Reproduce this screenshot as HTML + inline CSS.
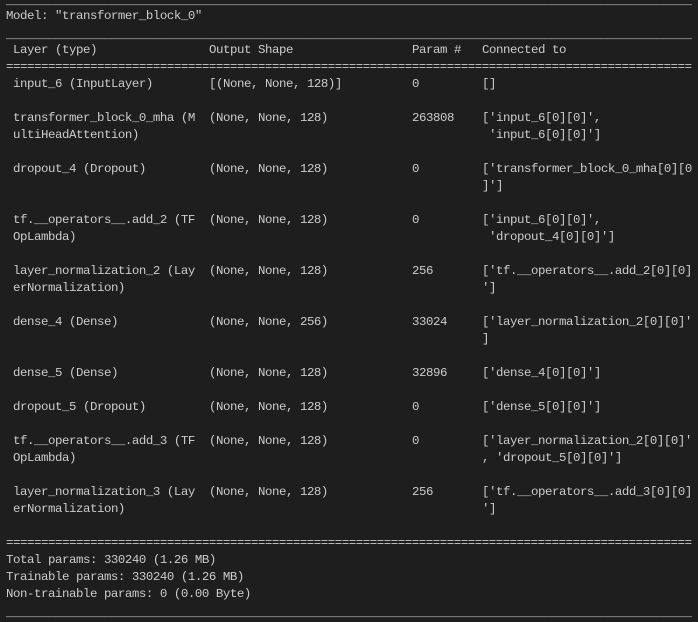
<!DOCTYPE html>
<html><head><meta charset="utf-8"><style>
html,body{margin:0;padding:0;background:#1e1e1e;width:698px;height:622px;overflow:hidden}
body{position:relative;font-family:"Liberation Mono",monospace;font-size:12.4px;letter-spacing:-0.44px;color:#cccccc}
.l{position:absolute;height:17px;line-height:17px;white-space:pre;left:6px}
.u{margin-top:2px}
.a{left:13px}.b{left:209px}.c{left:412px}.d{left:482px}
</style></head><body>
<div class="l u" style="top:-9px">__________________________________________________________________________________________________</div>
<div class="l" style="top:8px">Model: "transformer_block_0"</div>
<div class="l u" style="top:25px">__________________________________________________________________________________________________</div>
<div class="l a" style="top:42px">Layer (type)</div><div class="l b" style="top:42px">Output Shape</div><div class="l c" style="top:42px">Param #</div><div class="l d" style="top:42px">Connected to</div>
<div class="l" style="top:59px">==================================================================================================</div>

<div class="l a" style="top:76px">input_6 (InputLayer)</div><div class="l b" style="top:76px">[(None, None, 128)]</div><div class="l c" style="top:76px">0</div><div class="l d" style="top:76px">[]</div>

<div class="l a" style="top:110px">transformer_block_0_mha (M</div><div class="l b" style="top:110px">(None, None, 128)</div><div class="l c" style="top:110px">263808</div><div class="l d" style="top:110px">['input_6[0][0]',</div>
<div class="l a" style="top:127px">ultiHeadAttention)</div><div class="l d" style="top:127px"> 'input_6[0][0]']</div>

<div class="l a" style="top:161px">dropout_4 (Dropout)</div><div class="l b" style="top:161px">(None, None, 128)</div><div class="l c" style="top:161px">0</div><div class="l d" style="top:161px">['transformer_block_0_mha[0][0</div>
<div class="l d" style="top:178px">]']</div>

<div class="l a" style="top:212px">tf.__operators__.add_2 (TF</div><div class="l b" style="top:212px">(None, None, 128)</div><div class="l c" style="top:212px">0</div><div class="l d" style="top:212px">['input_6[0][0]',</div>
<div class="l a" style="top:229px">OpLambda)</div><div class="l d" style="top:229px"> 'dropout_4[0][0]']</div>

<div class="l a" style="top:263px">layer_normalization_2 (Lay</div><div class="l b" style="top:263px">(None, None, 128)</div><div class="l c" style="top:263px">256</div><div class="l d" style="top:263px">['tf.__operators__.add_2[0][0]</div>
<div class="l a" style="top:280px">erNormalization)</div><div class="l d" style="top:280px">']</div>

<div class="l a" style="top:314px">dense_4 (Dense)</div><div class="l b" style="top:314px">(None, None, 256)</div><div class="l c" style="top:314px">33024</div><div class="l d" style="top:314px">['layer_normalization_2[0][0]'</div>
<div class="l d" style="top:331px">]</div>

<div class="l a" style="top:365px">dense_5 (Dense)</div><div class="l b" style="top:365px">(None, None, 128)</div><div class="l c" style="top:365px">32896</div><div class="l d" style="top:365px">['dense_4[0][0]']</div>

<div class="l a" style="top:399px">dropout_5 (Dropout)</div><div class="l b" style="top:399px">(None, None, 128)</div><div class="l c" style="top:399px">0</div><div class="l d" style="top:399px">['dense_5[0][0]']</div>

<div class="l a" style="top:433px">tf.__operators__.add_3 (TF</div><div class="l b" style="top:433px">(None, None, 128)</div><div class="l c" style="top:433px">0</div><div class="l d" style="top:433px">['layer_normalization_2[0][0]'</div>
<div class="l a" style="top:450px">OpLambda)</div><div class="l d" style="top:450px">, 'dropout_5[0][0]']</div>

<div class="l a" style="top:484px">layer_normalization_3 (Lay</div><div class="l b" style="top:484px">(None, None, 128)</div><div class="l c" style="top:484px">256</div><div class="l d" style="top:484px">['tf.__operators__.add_3[0][0]</div>
<div class="l a" style="top:501px">erNormalization)</div><div class="l d" style="top:501px">']</div>

<div class="l" style="top:535px">==================================================================================================</div>
<div class="l" style="top:552px">Total params: 330240 (1.26 MB)</div>
<div class="l" style="top:569px">Trainable params: 330240 (1.26 MB)</div>
<div class="l" style="top:586px">Non-trainable params: 0 (0.00 Byte)</div>
<div class="l u" style="top:603px">__________________________________________________________________________________________________</div>
</body></html>
